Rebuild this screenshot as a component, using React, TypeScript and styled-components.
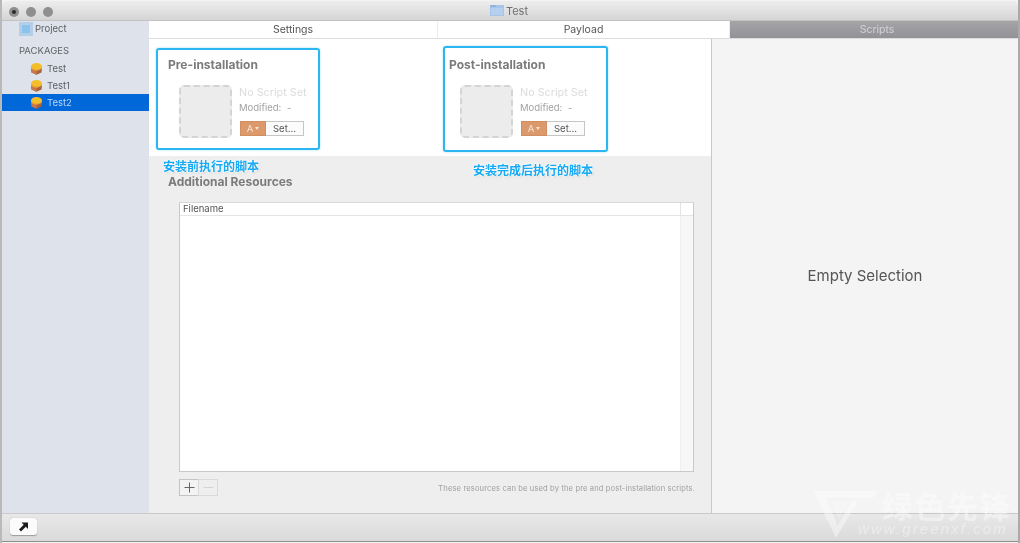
import React from "react";
import styled, { createGlobalStyle } from "styled-components";

const Global = createGlobalStyle`
  html, body { margin: 0; padding: 0; background: #fff; }
  body { font-family: Inter, "Liberation Sans", "Noto Sans CJK SC", sans-serif; overflow: hidden; }
`;

const Screen = styled.div`
  position: relative;
  width: 1020px;
  height: 543px;
  box-sizing: border-box;
  padding: 1px 2px 2px 2px;
  background: linear-gradient(90deg, #b9b9b9 0, #b9b9b9 2px, #f3f3f3 2px, #f3f3f3 1018px, #aaa 1018px);
  overflow: hidden;
  filter: blur(0.35px);
`;
const Window = styled.div`
  display: flex;
  flex-direction: column;
  height: 100%;
  border-radius: 5px 5px 0 0;
  overflow: hidden;
  box-shadow: 0 1px 0 #8f8f8f;
`;
const TitleBar = styled.div`
  position: relative;
  flex: 0 0 20px;
  display: flex;
  align-items: center;
  justify-content: center;
  gap: 2px;
  box-sizing: border-box;
  padding-right: 2px;
  background: linear-gradient(#ededed, #d5d5d5);
  border-bottom: 1px solid #c2c2c2;
  color: #6f6f6f;
  font-size: 11px;
`;
const Lights = styled.div`
  position: absolute;
  left: 7px;
  top: 6px;
  display: flex;
  gap: 7px;
`;
const Light = styled.span`
  width: 10px;
  height: 10px;
  border-radius: 50%;
  background: #8f8f90;
  display: flex;
  align-items: center;
  justify-content: center;
  &::after {
    content: "";
    width: ${(p: { $dot?: boolean }) => (p.$dot ? "4px" : "0")};
    height: ${(p: { $dot?: boolean }) => (p.$dot ? "4px" : "0")};
    border-radius: 50%;
    background: #2b2b2b;
  }
`;
const Main = styled.div`
  flex: 1;
  display: flex;
  min-height: 0;
`;
const Sidebar = styled.div`
  flex: 0 0 147px;
  background: #dee2ea;
  color: #5c5f66;
  font-size: 9.5px;
`;
const ProjectRow = styled.div`
  display: flex;
  align-items: center;
  gap: 2px;
  height: 15px;
  padding-left: 17px;
`;
const GroupLabel = styled.div`
  height: 14px;
  margin-top: 8px;
  margin-bottom: 2px;
  padding-left: 17px;
  line-height: 14px;
  color: #5f6268;
`;
const PackageRow = styled.div<{ $selected?: boolean }>`
  display: flex;
  align-items: center;
  gap: 4px;
  box-sizing: border-box;
  height: 17px;
  padding: 0 0 1px 28px;
  background: ${(p) => (p.$selected ? "#0068d9" : "transparent")};
  color: ${(p) => (p.$selected ? "#b9d5f5" : "#5c5f66")};
`;
const Content = styled.div`
  flex: 1;
  display: flex;
  flex-direction: column;
  min-width: 0;
`;
const Tabs = styled.div`
  flex: 0 0 18px;
  display: grid;
  grid-template-columns: 289px 292px 1fr;
  box-sizing: border-box;
  border-bottom: 1px solid #dcdcdc;
  background: #fff;
`;
const Tab = styled.div<{ $active?: boolean }>`
  display: flex;
  align-items: center;
  justify-content: center;
  box-sizing: border-box;
  padding-left: ${(p) => (p.$active ? "6px" : "0")};
  font-size: 10.5px;
  color: ${(p) => (p.$active ? "#d3d3d6" : "#555")};
  background: ${(p) => (p.$active ? "linear-gradient(#a5a5a8, #929296)" : "#fff")};
  border-right: ${(p) => (p.$active ? "0" : "1px solid #ececec")};
`;
const Split = styled.div`
  flex: 1;
  display: flex;
  min-height: 0;
`;
const Center = styled.div`
  flex: 0 0 563px;
  display: flex;
  flex-direction: column;
  box-sizing: border-box;
  border-right: 1px solid #c9c9c9;
`;
const ScriptsRow = styled.div`
  position: relative;
  flex: 0 0 117px;
  display: grid;
  grid-template-columns: 281px 1fr;
  background: #fff;
`;
const ScriptPanel = styled.div`
  position: relative;
  padding: 19px 0 0 19px;
`;
const Heading = styled.div`
  font-size: 12px;
  font-weight: 700;
  line-height: 14px;
  color: #7b7b7b;
`;
const ScriptBody = styled.div`
  display: flex;
  gap: 7px;
  margin: 13px 0 0 11px;
`;
const Thumb = styled.div`
  box-sizing: border-box;
  width: 53px;
  height: 53px;
  border: 2px dashed #d4d4d4;
  border-radius: 5px;
  background: #ececec;
`;
const ScriptInfo = styled.div`
  display: flex;
  flex-direction: column;
`;
const NoScript = styled.div`
  margin-top: 1px;
  font-size: 10.8px;
  line-height: 14px;
  color: #dcdcdc;
`;
const Modified = styled.div`
  margin-top: 2px;
  font-size: 9.5px;
  line-height: 12px;
  color: #a2a2a2;
  word-spacing: 3px;
`;
const ButtonRow = styled.div`
  display: flex;
  margin-top: 7px;
  margin-left: 1px;
`;
const LangButton = styled.div`
  box-sizing: border-box;
  width: 26px;
  height: 15px;
  display: flex;
  align-items: center;
  justify-content: center;
  gap: 2px;
  background: #dc9a6c;
  border: 1px solid #cf8f62;
  color: #f6e3d5;
  font-size: 9.5px;
  &::after {
    content: "";
    border-left: 2.5px solid transparent;
    border-right: 2.5px solid transparent;
    border-top: 3px solid #f6e3d5;
  }
`;
const SetButton = styled.div`
  box-sizing: border-box;
  width: 38px;
  height: 15px;
  display: flex;
  align-items: center;
  justify-content: center;
  background: #fbfbfb;
  border: 1px solid #c6c6c6;
  border-left: 0;
  color: #555;
  font-size: 9.5px;
`;
const Callout = styled.div<{ $left: number; $top: number; $w: number; $h: number }>`
  position: absolute;
  left: ${(p) => p.$left}px;
  top: ${(p) => p.$top}px;
  width: ${(p) => p.$w}px;
  height: ${(p) => p.$h}px;
  box-sizing: border-box;
  border: 2px solid #2bb6f2;
  border-radius: 3px;
  box-shadow: 0 0 2px rgba(43, 182, 242, 0.5);
`;
const Resources = styled.div`
  position: relative;
  flex: 1;
  background: #eee;
  padding: 19px 17px 0 19px;
`;
const Note = styled.div<{ $left: number; $top: number }>`
  position: absolute;
  left: ${(p) => p.$left}px;
  top: ${(p) => p.$top}px;
  font-family: "Noto Sans CJK SC", sans-serif;
  font-size: 12px;
  font-weight: 700;
  line-height: 14px;
  color: #16a9f4;
  white-space: nowrap;
  text-shadow: 0 0 2px #fff, 0 0 2px #fff, 0 0 3px #fff, 0 0 3px #fff, 1px 1px 2px #bbb;
`;
const FileTable = styled.div`
  display: flex;
  flex-direction: column;
  box-sizing: border-box;
  height: 270px;
  margin: 13px 0 0 11px;
  background: #fff;
  border: 1px solid #c9c9c9;
  border-top-color: #d8d8d8;
`;
const TableHead = styled.div`
  flex: 0 0 12px;
  display: flex;
  border-bottom: 1px solid #e4e4e4;
  font-size: 9.5px;
  line-height: 12px;
  color: #555;
`;
const HeadCell = styled.div`
  flex: 1;
  padding-left: 3px;
  border-right: 1px solid #e4e4e4;
`;
const HeadEnd = styled.div`
  flex: 0 0 12px;
`;
const TableBody = styled.div`
  flex: 1;
  display: flex;
`;
const Rows = styled.div`
  flex: 1;
`;
const Scroller = styled.div`
  flex: 0 0 12px;
  background: #f7f7f7;
  border-left: 1px solid #efefef;
`;
const TableFoot = styled.div`
  display: flex;
  align-items: center;
  justify-content: space-between;
  margin: 7px -1px 0 11px;
`;
const Steppers = styled.div`
  display: flex;
`;
const Stepper = styled.div<{ $off?: boolean }>`
  box-sizing: border-box;
  width: 20px;
  height: 17px;
  display: flex;
  align-items: center;
  justify-content: center;
  background: ${(p) => (p.$off ? "#eee" : "#f3f3f3")};
  border: 1px solid ${(p) => (p.$off ? "#dadada" : "#c4c4c4")};
  margin-left: ${(p) => (p.$off ? "-1px" : "0")};
`;
const FootText = styled.div`
  font-size: 7.6px;
  letter-spacing: 0.12px;
  color: #a0a0a0;
  white-space: nowrap;
  margin-top: 1px;
`;
const Inspector = styled.div`
  flex: 1;
  display: flex;
  align-items: center;
  justify-content: center;
  padding-bottom: 2px;
  background: #f4f4f4;
  color: #555;
  font-size: 15px;
`;
const Footer = styled.div`
  flex: 0 0 28px;
  box-sizing: border-box;
  padding: 4px 0 0 8px;
  background: linear-gradient(#e8e8e8, #dadada);
  border-top: 1px solid #c9c9c9;
`;
const CornerButton = styled.div`
  width: 27px;
  height: 17px;
  display: flex;
  align-items: center;
  justify-content: center;
  background: #fbfbfb;
  border-radius: 3px;
  box-shadow: 0 0.5px 1px rgba(0, 0, 0, 0.3);
`;
const Watermark = styled.div`
  position: absolute;
  left: 812px;
  top: 488px;
  width: 205px;
  height: 55px;
  color: rgba(255, 255, 255, 0.4);
`;
const WaterLogo = styled.svg`
  position: absolute;
  left: 0;
  top: 0;
`;
const WaterTitle = styled.div`
  position: absolute;
  left: 70px;
  top: 3px;
  font-family: "Noto Sans CJK SC", sans-serif;
  font-size: 31px;
  font-weight: 700;
  line-height: 27px;
  letter-spacing: 1.5px;
  white-space: nowrap;
`;
const WaterUrl = styled.div`
  position: absolute;
  left: 46px;
  top: 32px;
  font-family: "Liberation Sans", sans-serif;
  font-style: italic;
  font-size: 15px;
  line-height: 18px;
  letter-spacing: 2.1px;
  white-space: nowrap;
`;

const PackageIcon = () => (
  <svg width="13" height="13" viewBox="0 0 13 13">
    <path d="M1 6.5 L6.5 8.5 L12 6.5 L11.5 10.5 L6.5 12.8 L1.5 10.5 Z" fill="#a8623e" />
    <path d="M1 6.5 L6.5 8.5 L6.5 12.8 L1.5 10.5 Z" fill="#c9774c" />
    <ellipse cx="6.5" cy="4.8" rx="5.6" ry="3.8" fill="#f4bd2c" />
    <path d="M1 5.6 Q6.5 10 12 5.6 L12 6.5 L6.5 8.8 L1 6.5 Z" fill="#e2913a" />
  </svg>
);

const FolderIcon = () => (
  <svg width="14" height="11" viewBox="0 0 14 11">
    <rect x="0" y="0" width="14" height="11" fill="#a5c6ea" />
    <rect x="0" y="0" width="6" height="2" fill="#8fb6e0" />
    <rect x="1" y="3" width="12" height="7" fill="#b5d0ee" />
  </svg>
);

const ProjectIcon = () => (
  <svg width="14" height="14" viewBox="0 0 14 14">
    <rect width="14" height="14" fill="#b3cfe8" />
    <rect x="3" y="3" width="8" height="8" fill="#8bc2ee" />
  </svg>
);

export default function App() {
  return (
    <Screen>
      <Global />
      <Window>
        <TitleBar>
          <Lights>
            <Light $dot />
            <Light />
            <Light />
          </Lights>
          <FolderIcon />
          Test
        </TitleBar>
        <Main>
          <Sidebar>
            <ProjectRow>
              <ProjectIcon />
              Project
            </ProjectRow>
            <GroupLabel>PACKAGES</GroupLabel>
            <PackageRow>
              <PackageIcon />
              Test
            </PackageRow>
            <PackageRow>
              <PackageIcon />
              Test1
            </PackageRow>
            <PackageRow $selected>
              <PackageIcon />
              Test2
            </PackageRow>
          </Sidebar>
          <Content>
            <Tabs>
              <Tab>Settings</Tab>
              <Tab>Payload</Tab>
              <Tab $active>Scripts</Tab>
            </Tabs>
            <Split>
              <Center>
                <ScriptsRow>
                  <ScriptPanel>
                    <Heading>Pre-installation</Heading>
                    <ScriptBody>
                      <Thumb />
                      <ScriptInfo>
                        <NoScript>No Script Set</NoScript>
                        <Modified>Modified: -</Modified>
                        <ButtonRow>
                          <LangButton>A</LangButton>
                          <SetButton>Set...</SetButton>
                        </ButtonRow>
                      </ScriptInfo>
                    </ScriptBody>
                    <Callout $left={7} $top={9} $w={164} $h={102} />
                  </ScriptPanel>
                  <ScriptPanel>
                    <Heading>Post-installation</Heading>
                    <ScriptBody>
                      <Thumb />
                      <ScriptInfo>
                        <NoScript>No Script Set</NoScript>
                        <Modified>Modified: -</Modified>
                        <ButtonRow>
                          <LangButton>A</LangButton>
                          <SetButton>Set...</SetButton>
                        </ButtonRow>
                      </ScriptInfo>
                    </ScriptBody>
                    <Callout $left={13} $top={7} $w={165} $h={106} />
                  </ScriptPanel>
                </ScriptsRow>
                <Resources>
                  <Heading>Additional Resources</Heading>
                  <FileTable>
                    <TableHead>
                      <HeadCell>Filename</HeadCell>
                      <HeadEnd />
                    </TableHead>
                    <TableBody>
                      <Rows />
                      <Scroller />
                    </TableBody>
                  </FileTable>
                  <TableFoot>
                    <Steppers>
                      <Stepper>
                        <svg width="11" height="11" viewBox="0 0 11 11">
                          <path d="M5.5 0.5V10.5M0.5 5.5H10.5" stroke="#666" strokeWidth="1" />
                        </svg>
                      </Stepper>
                      <Stepper $off>
                        <svg width="11" height="11" viewBox="0 0 11 11">
                          <path d="M0.5 5.5H10.5" stroke="#d4d4d4" strokeWidth="1" />
                        </svg>
                      </Stepper>
                    </Steppers>
                    <FootText>These resources can be used by the pre and post-installation scripts.</FootText>
                  </TableFoot>
                  <Note $left={14} $top={3}>安装前执行的脚本</Note>
                  <Note $left={324} $top={7}>安装完成后执行的脚本</Note>
                </Resources>
              </Center>
              <Inspector>Empty Selection</Inspector>
            </Split>
          </Content>
        </Main>
        <Footer>
          <CornerButton>
            <svg width="11" height="11" viewBox="0 0 11 11">
              <path d="M3.5 1.5H10V8L7.8 5.8L3 10.5L1 8.5L5.7 3.7Z" fill="#1c1c1c" />
            </svg>
          </CornerButton>
        </Footer>
      </Window>
      <Watermark>
        <WaterLogo width="68" height="52" viewBox="0 0 68 52">
          <path d="M1.3 3H67L61 9.7H13.7L25 36L24 50Z" fill="currentColor" />
          <path d="M46 13H40L24 40L24 50Z" fill="currentColor" />
          <path d="M18 13H38L27 31Z" fill="currentColor" opacity="0.45" />
        </WaterLogo>
        <WaterTitle>绿色先锋</WaterTitle>
        <WaterUrl>www.greenxf.com</WaterUrl>
      </Watermark>
    </Screen>
  );
}
